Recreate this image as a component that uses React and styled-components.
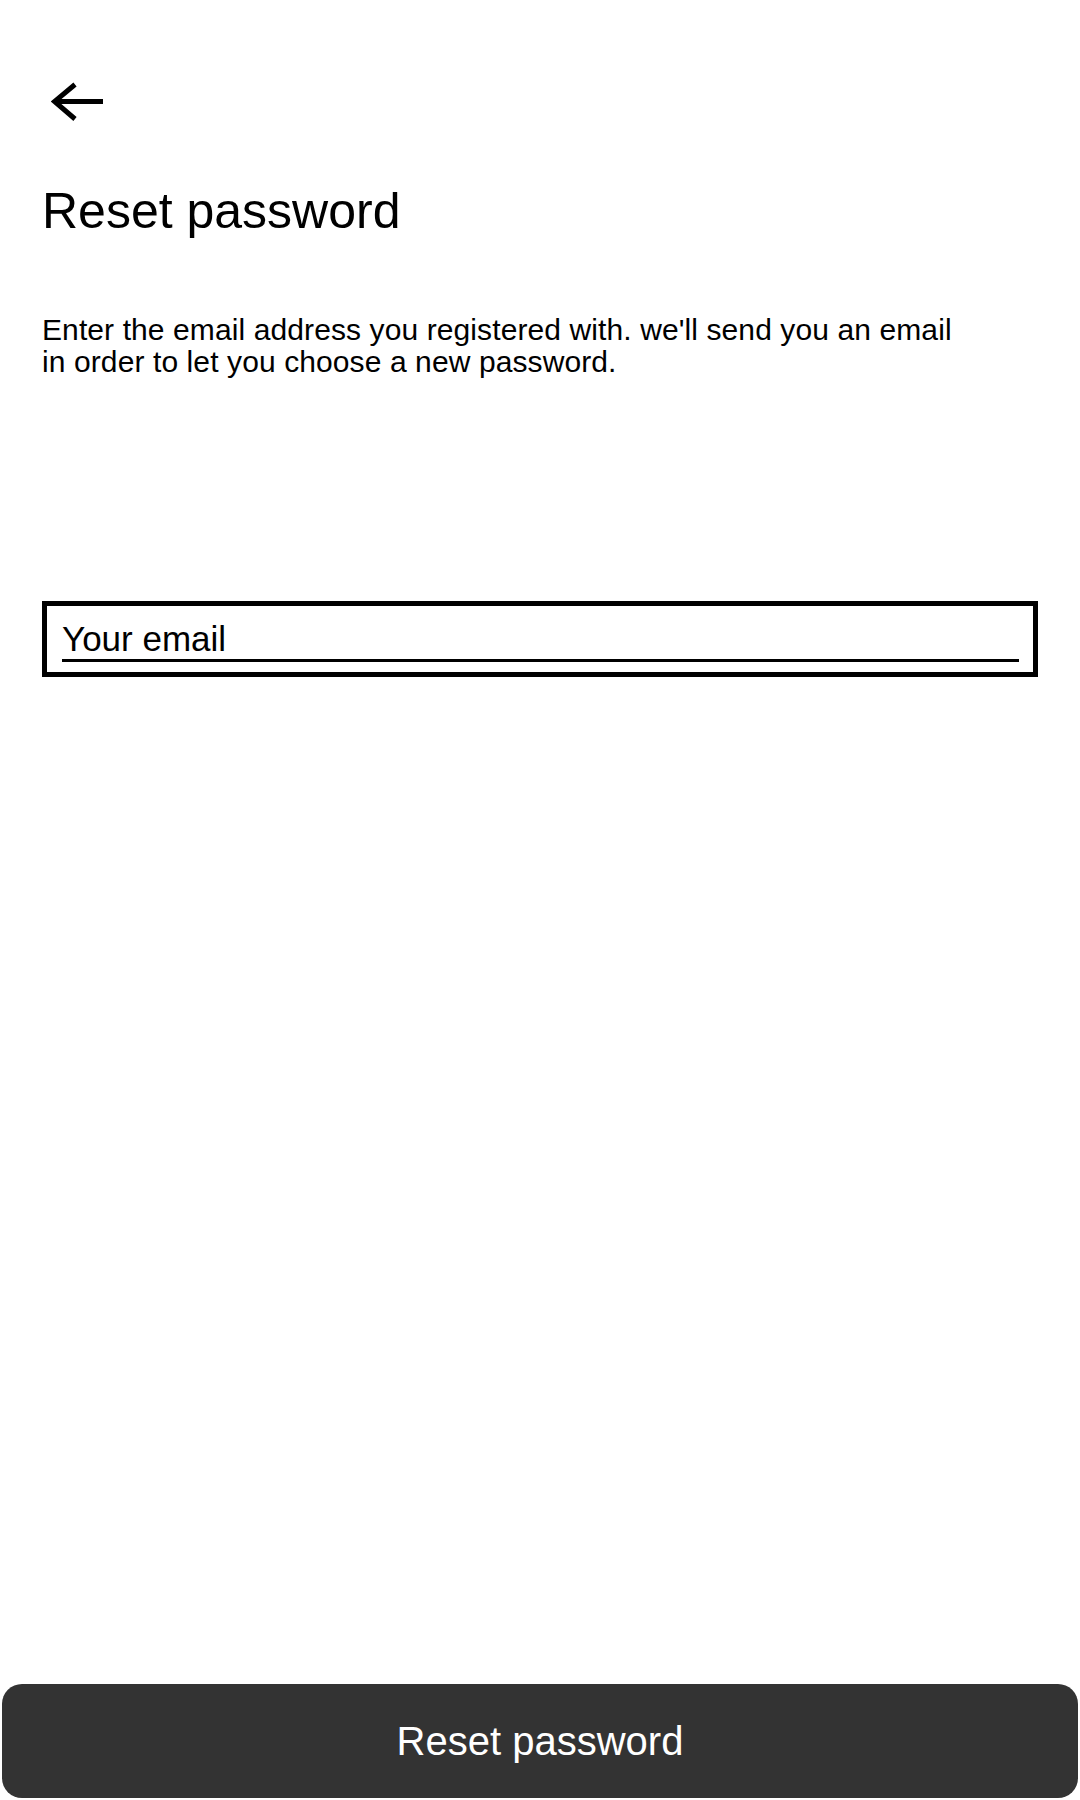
import React, { useState } from "react";
import styled, { createGlobalStyle } from "styled-components";

const GlobalStyle = createGlobalStyle`
    html, body {
        margin: 0;
        padding: 0;
        background: #fff;
    }
    body {
        font-family: "Liberation Sans", Arial, sans-serif;
        color: #000;
    }
    * {
        box-sizing: border-box;
    }
`;

const Screen = styled.div`
    min-height: 100vh;
    display: flex;
    flex-direction: column;
`;
const Content = styled.div`
    flex: 1;
    padding: 0 42px;
    display: flex;
    flex-direction: column;
`;
const BackButton = styled.button`
    align-self: flex-start;
    margin: 82px 0 0 9px;
    padding: 0;
    border: none;
    background: none;
    cursor: pointer;
    display: flex;
    svg {
        display: block;
    }
`;
const Title = styled.h1`
    margin: 61px 0 0;
    font-size: 50px;
    line-height: 56px;
    font-weight: 400;
`;
const Description = styled.p`
    margin: 75px 0 0;
    max-width: 930px;
    font-size: 30px;
    line-height: 32px;
    letter-spacing: 0.1px;
`;
const Field = styled.label`
    display: block;
    margin-top: 223px;
    border: 5px solid #000;
    padding: 13px 14px 10px 15px;
`;
const EmailInput = styled.input`
    display: block;
    width: 100%;
    height: 43px;
    padding: 0;
    border: none;
    border-bottom: 3px solid #000;
    outline: none;
    background: transparent;
    font-family: inherit;
    font-size: 35px;
    line-height: 40px;
    color: #000;
    &::placeholder {
        color: #000;
        opacity: 1;
    }
`;
const SubmitButton = styled.button`
    margin: 0 2px 2px;
    height: 114px;
    border: none;
    border-radius: 20px;
    background: #333333;
    color: #fff;
    font-family: inherit;
    font-size: 40px;
    cursor: pointer;
`;

function BackArrow() {
    return (
        <svg width="54" height="40" viewBox="0 0 54 40" fill="none">
            <path d="M24 2.5 L3.5 19.5 L24 37" stroke="#000" strokeWidth="5" />
            <path d="M4 19.5 H52" stroke="#000" strokeWidth="5" />
        </svg>
    );
}

function App() {
    const [email, setEmail] = useState("");
    return (
        <Screen>
            <GlobalStyle />
            <Content>
                <BackButton aria-label="Back">
                    <BackArrow />
                </BackButton>
                <Title>Reset password</Title>
                <Description>
                    Enter the email address you registered with. we'll send
                    you an email in order to let you choose a new password.
                </Description>
                <Field>
                    <EmailInput
                        type="email"
                        placeholder="Your email"
                        value={email}
                        onChange={(e) => setEmail(e.target.value)}
                    />
                </Field>
            </Content>
            <SubmitButton>Reset password</SubmitButton>
        </Screen>
    );
}

export default App;
